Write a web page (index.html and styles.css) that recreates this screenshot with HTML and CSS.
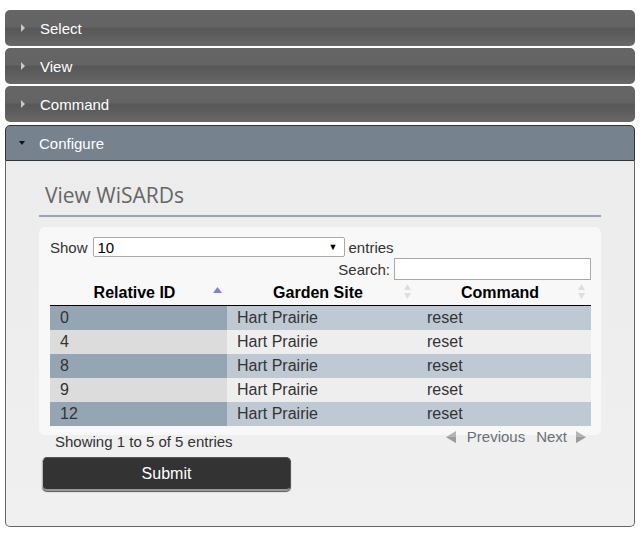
FILE: index.html
```html
<!DOCTYPE html>
<html>
<head>
<meta charset="utf-8">
<link rel="stylesheet" href="styles.css">
</head>
<body>
<div class="accordion">
  <div class="acc-header"><span class="arrow-right"></span><span>Select</span></div>
  <div class="acc-header"><span class="arrow-right"></span><span>View</span></div>
  <div class="acc-header"><span class="arrow-right"></span><span>Command</span></div>
  <div class="acc-header active"><span class="arrow-down"></span><span>Configure</span></div>
  <div class="acc-content">
    <h2 class="title">View WiSARDs</h2>
    <div class="dt-wrapper">
      <div class="dt-length">Show <div class="fake-select"><span>10</span><span class="caret">▼</span></div> entries</div>
      <div class="dt-filter">Search: <input type="text" class="search-input"></div>
      <table class="dt-table">
        <thead>
          <tr>
            <th class="col1">Relative ID<svg class="sort" width="9" height="6" viewBox="0 0 9 6"><polygon points="4.5,0 9,6 0,6" fill="#7f7fe0"/></svg></th>
            <th class="col2">Garden Site<svg class="sort both" width="9" height="15" viewBox="0 0 9 15"><polygon points="4.5,0 8,6 1,6" fill="#dedede"/><polygon points="1,9 8,9 4.5,15" fill="#dedede"/></svg></th>
            <th class="col3">Command<svg class="sort both" width="9" height="15" viewBox="0 0 9 15"><polygon points="4.5,0 8,6 1,6" fill="#dedede"/><polygon points="1,9 8,9 4.5,15" fill="#dedede"/></svg></th>
          </tr>
        </thead>
        <tbody>
          <tr class="odd"><td class="sorting">0</td><td>Hart Prairie</td><td>reset</td></tr>
          <tr class="even"><td class="sorting">4</td><td>Hart Prairie</td><td>reset</td></tr>
          <tr class="odd"><td class="sorting">8</td><td>Hart Prairie</td><td>reset</td></tr>
          <tr class="even"><td class="sorting">9</td><td>Hart Prairie</td><td>reset</td></tr>
          <tr class="odd"><td class="sorting">12</td><td>Hart Prairie</td><td>reset</td></tr>
        </tbody>
      </table>
    </div>
    <div class="dt-footer">
      <div class="dt-info">Showing 1 to 5 of 5 entries</div>
      <div class="dt-paginate">
        <svg class="pg-arrow left" width="10" height="12" viewBox="0 0 10 12"><polygon points="10,0 10,12 0,6" fill="#b4b4b4"/><polygon points="10,6 10,12 0,6" fill="#9c9c9c"/></svg>
        <span class="pg-prev">Previous</span>
        <span class="pg-next">Next</span>
        <svg class="pg-arrow right" width="10" height="12" viewBox="0 0 10 12"><polygon points="0,0 0,12 10,6" fill="#b4b4b4"/><polygon points="0,6 0,12 10,6" fill="#9c9c9c"/></svg>
      </div>
    </div>
    <button class="submit-btn">Submit</button>
  </div>
</div>
</body>
</html>
```

FILE: styles.css
```css
html, body {
  margin: 0;
  padding: 0;
  background: #ffffff;
}
body {
  font-family: "Liberation Sans", Arial, sans-serif;
  color: #333;
}
.accordion {
  padding: 10px 6px 0 5px;
}
.acc-header {
  height: 36px;
  margin-top: 2px;
  border-radius: 5px;
  display: flex;
  align-items: center;
  padding-left: 16px;
  box-sizing: border-box;
  color: #fff;
  font-size: 15px;
  background: linear-gradient(to bottom, #656565 0%, #646464 46%, #575757 52%, #5f5f5f 75%, #686868 100%);
}
.acc-header:first-child {
  margin-top: 0;
}
.arrow-right {
  width: 0;
  height: 0;
  border-top: 4px solid transparent;
  border-bottom: 4px solid transparent;
  border-left: 4px solid #c8c8c8;
  margin-right: 15px;
  margin-left: 0;
}
.acc-header.active {
  margin-top: 3px;
  background: #76828e;
  border: 1px solid #333;
  border-radius: 5px 5px 0 0;
  padding-left: 13px;
}
.arrow-down {
  width: 0;
  height: 0;
  border-left: 3.5px solid transparent;
  border-right: 3.5px solid transparent;
  border-top: 4px solid #111;
  margin-right: 14px;
}
.acc-content {
  height: 366px;
  box-sizing: border-box;
  border: 1px solid #666;
  border-top: none;
  border-radius: 0 0 5px 5px;
  background: linear-gradient(to bottom, #ececec, #f0f0f0);
  padding: 20px 33px 0 33px;
}
.title {
  margin: 0;
  font-family: "Open Sans", "DejaVu Sans", sans-serif;
  font-weight: normal;
  font-size: 21px;
  line-height: 28px;
  color: #666;
  padding: 0 0 6px 6px;
  border-bottom: 2px solid #9aa6b8;
}
.dt-wrapper {
  margin-top: 10px;
  background: #f8f8f8;
  border-radius: 6px;
  padding: 10px 10px 9px 11px;
  font-size: 15px;
}
.dt-length {
  display: flex;
  align-items: center;
  height: 20px;
}
.fake-select {
  width: 252px;
  height: 20px;
  box-sizing: border-box;
  border: 1px solid #a9a9a9;
  border-radius: 2px;
  background: #fff;
  margin: 0 4px 0 5px;
  display: flex;
  align-items: center;
  justify-content: space-between;
  padding: 0 6px 0 4px;
  font-size: 15px;
  color: #000;
}
.caret {
  font-size: 9px;
  color: #000;
}
.dt-filter {
  display: flex;
  justify-content: flex-end;
  align-items: center;
  margin-top: 1px;
  height: 22px;
}
.search-input {
  width: 197px;
  height: 22px;
  box-sizing: border-box;
  border: 1px solid #a9a9a9;
  margin: 0 0 0 4px;
  padding: 0;
  background: #fff;
}
.dt-table {
  width: 541px;
  border-collapse: collapse;
  font-size: 16px;
}
.dt-table th {
  position: relative;
  font-weight: bold;
  color: #000;
  text-align: center;
  padding: 4px 18px 3px 10px;
  line-height: 18px;
  border-bottom: 1px solid #000;
}
.col1 { width: 177px; }
.col2 { width: 190px; }
.col3 { width: 174px; }
.dt-table th, .dt-table td {
  box-sizing: border-box;
}
.sort {
  position: absolute;
  right: 5px;
  top: 7px;
}
.sort.both {
  top: 4px;
}
.dt-table td {
  padding: 3px 10px;
  line-height: 18px;
  color: #333;
}
.odd td { background: #bfc9d4; }
.odd td.sorting { background: #96a5b4; }
.even td { background: #eeeeee; }
.even td.sorting { background: #dcdcdc; }
.dt-footer {
  display: flex;
  justify-content: space-between;
  align-items: flex-start;
  margin-top: -7px;
  padding: 0 15px 0 16px;
  font-size: 15px;
  line-height: 17px;
}
.dt-info {
  padding-top: 5px;
  color: #333;
}
.dt-paginate {
  display: flex;
  align-items: center;
  color: #6b6f78;
}
.pg-arrow.left { margin-right: 11px; }
.pg-next { margin-left: 11px; }
.pg-arrow.right { margin-left: 9px; }
.submit-btn {
  display: block;
  margin: 7px 0 0 3px;
  width: 249px;
  height: 34px;
  background: #333;
  color: #fff;
  font-family: "Liberation Sans", Arial, sans-serif;
  font-size: 16px;
  border: 1px solid #555;
  border-left-color: #bbb;
  border-bottom: 2px solid #999;
  border-radius: 5px;
  box-shadow: 0 1px 1px #555;
  padding: 0;
}
```
